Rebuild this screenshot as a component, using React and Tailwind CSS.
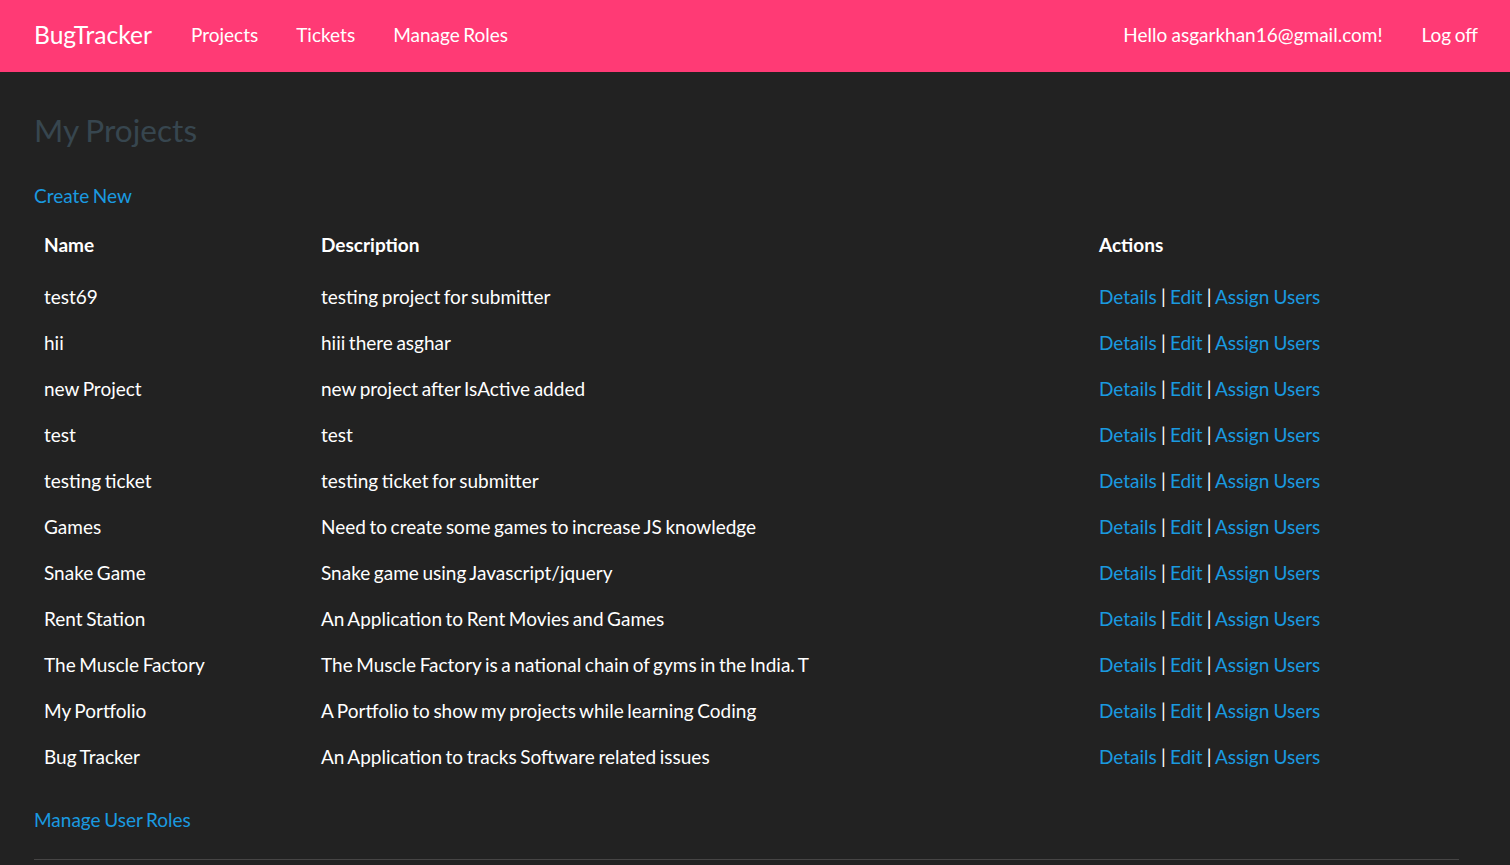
import React from 'react';

const projects = [
  ['test69', 'testing project for submitter'],
  ['hii', 'hiii there asghar'],
  ['new Project', 'new project after IsActive added'],
  ['test', 'test'],
  ['testing ticket', 'testing ticket for submitter'],
  ['Games', 'Need to create some games to increase JS knowledge'],
  ['Snake Game', 'Snake game using Javascript/jquery'],
  ['Rent Station', 'An Application to Rent Movies and Games'],
  ['The Muscle Factory', 'The Muscle Factory is a national chain of gyms in the India. T'],
  ['My Portfolio', 'A Portfolio to show my projects while learning Coding'],
  ['Bug Tracker', 'An Application to tracks Software related issues'],
];

export default function App() {
  return (
    <div className="min-h-[865px] bg-[#222222] text-white font-['Lato','Open_Sans',sans-serif] text-[19px] [word-spacing:-1.3px]">
      {/* Navbar */}
      <nav className="h-[72px] bg-[#ff3a75] flex items-center justify-between pl-[34px] pr-[32px] pb-[2px]">
        <div className="flex items-center">
          <span className="text-[24.6px] mr-[39px]">BugTracker</span>
          <div className="flex items-center gap-[38px]">
            <a className="cursor-pointer">Projects</a>
            <a className="cursor-pointer">Tickets</a>
            <a className="cursor-pointer">Manage Roles</a>
          </div>
        </div>
        <div className="flex items-center gap-[39px]">
          <a className="cursor-pointer [word-spacing:-0.5px]">Hello asgarkhan16@gmail.com!</a>
          <a className="cursor-pointer">Log off</a>
        </div>
      </nav>

      <main className="pl-[34px] pr-[51px]">
        <h2 className="text-[31.6px] text-[#37464f] mt-[38px] leading-[40px]">My Projects</h2>
        <p className="mt-[32px] leading-[28px]">
          <a className="text-[#1a9ae0] cursor-pointer">Create New</a>
        </p>

        <div className="mt-[12px]">
          <div className="grid grid-cols-[277px_778px_1fr] font-bold h-[46px] items-center px-[10px]">
            <div>Name</div>
            <div>Description</div>
            <div>Actions</div>
          </div>
          <div className="pt-[6px]">
            {projects.map(([name, desc]) => (
              <div key={name} className="grid grid-cols-[277px_778px_1fr] h-[46px] items-center px-[10px]">
                <div>{name}</div>
                <div>{desc}</div>
                <div className="[word-spacing:-0.7px]">
                  <a className="text-[#1a9ae0] cursor-pointer">Details</a>
                  <span> | </span>
                  <a className="text-[#1a9ae0] cursor-pointer">Edit</a>
                  <span> | </span>
                  <a className="text-[#1a9ae0] cursor-pointer">Assign Users</a>
                </div>
              </div>
            ))}
          </div>
        </div>

        <p className="mt-[26px] leading-[28px]">
          <a className="text-[#1a9ae0] cursor-pointer">Manage User Roles</a>
        </p>
        <hr className="mt-[25px] border-0 border-t border-[#464545]" />
      </main>
    </div>
  );
}
